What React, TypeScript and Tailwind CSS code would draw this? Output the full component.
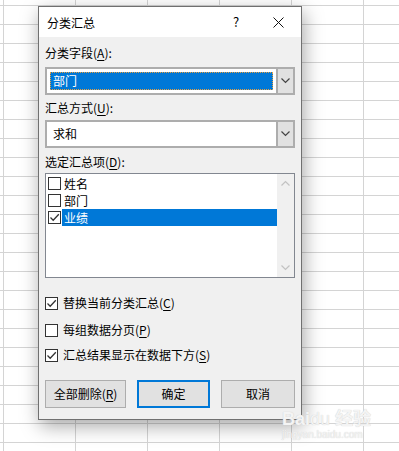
import React from 'react';

const font = "font-['Microsoft_YaHei_UI','Noto_Sans_CJK_SC',sans-serif]";

// small chevron used by combo boxes and the list scrollbar
const Chevron = ({ up = false, color = '#444' }: { up?: boolean; color?: string }) => (
  <svg width="9" height="6" viewBox="0 0 9 6" className="block">
    <path d={up ? 'M0.5 5.5 L4.5 1.5 L8.5 5.5' : 'M0.5 0.5 L4.5 4.5 L8.5 0.5'} fill="none" stroke={color} strokeWidth="1.2" />
  </svg>
);

const Check = () => (
  <svg width="11" height="11" viewBox="0 0 11 11" className="block">
    <path d="M1.5 5.5 L4.2 8.2 L9.8 2.2" fill="none" stroke="#333" strokeWidth="1.3" />
  </svg>
);

const Box = ({ checked = false }: { checked?: boolean }) => (
  <span className="flex h-[13px] w-[13px] shrink-0 items-center justify-center border border-[#333] bg-white">
    {checked && <Check />}
  </span>
);

const Combo = ({ value, focused = false }: { value: string; focused?: boolean }) => (
  <div className="flex h-[28px] w-[250px] border-2 border-[#adadad] bg-white">
    <div className="flex flex-1 items-center p-[3px]">
      {focused ? (
        <div className="flex h-full w-full items-center border border-dotted border-[#e8a040] bg-[#0078d7] pl-[2px] text-white">{value}</div>
      ) : (
        <div className="pl-[3px]">{value}</div>
      )}
    </div>
    <div className="flex w-[17px] items-center justify-center border-l-2 border-[#adadad] bg-[#e1e1e1]">
      <Chevron />
    </div>
  </div>
);

const Label = ({ text, hot, className = '' }: { text: string; hot: string; className?: string }) => (
  <div className={`h-[16px] leading-[16px] ${className}`}>
    {text}(<span className="underline underline-offset-2">{hot}</span>):
  </div>
);

const CheckRow = ({ text, hot, checked, className = '' }: { text: string; hot: string; checked?: boolean; className?: string }) => (
  <div className={`flex h-[16px] items-center gap-[5px] leading-[16px] ${className}`}>
    <Box checked={checked} />
    <span>
      {text}(<span className="underline underline-offset-2">{hot}</span>)
    </span>
  </div>
);

const items = [
  { name: '姓名', checked: false },
  { name: '部门', checked: false },
  { name: '业绩', checked: true },
];

export default function App() {
  return (
    <div
      className={`relative h-[451px] w-[399px] overflow-hidden bg-white pl-[38px] pt-[6px] text-[12px] text-black ${font} [background-image:linear-gradient(to_right,#d4d4d4_1px,transparent_1px),linear-gradient(to_bottom,#d4d4d4_1px,transparent_1px)] [background-size:72px_19px] [background-position:3px_5px]`}
    >
      <div className="flex h-[414px] w-[264px] flex-col border border-[#707070] bg-[#f0f0f0] shadow-[2px_6px_18px_rgba(0,0,0,0.35)]">
        {/* title bar */}
        <div className="flex h-[30px] items-center bg-white pl-[8px]">
          <span className="flex-1 pt-[2px]">分类汇总</span>
          <span className="w-[20px] text-center text-[13px]">?</span>
          <span className="ml-[25px] mr-[16px] flex w-[14px] items-center justify-center">
            <svg width="11" height="11" viewBox="0 0 11 11">
              <path d="M0.5 0.5 L10.5 10.5 M10.5 0.5 L0.5 10.5" stroke="#111" strokeWidth="1" />
            </svg>
          </span>
        </div>

        {/* body */}
        <div className="flex flex-col px-[6px]">
          <Label text="分类字段" hot="A" className="mt-[8px]" />
          <div className="mt-[6px]">
            <Combo value="部门" focused />
          </div>

          <Label text="汇总方式" hot="U" className="mt-[5px]" />
          <div className="mt-[4px]">
            <Combo value="求和" />
          </div>

          <Label text="选定汇总项" hot="D" className="mt-[6px]" />
          <div className="mt-[3px] flex h-[105px] w-[250px] border border-[#828790] bg-white">
            <div className="flex flex-1 flex-col pl-[2px] pt-[1px]">
              {items.map((it) => (
                <div key={it.name} className="flex h-[17px] items-center">
                  <Box checked={it.checked} />
                  <span
                    className={`ml-[1px] flex h-full flex-1 items-center pl-[2px] ${it.checked ? 'bg-[#0078d7] text-white' : ''}`}
                  >
                    {it.name}
                  </span>
                </div>
              ))}
            </div>
            <div className="flex w-[17px] flex-col items-center justify-between bg-[#f0f0f0] py-[6px]">
              <Chevron up color="#c2c2c2" />
              <Chevron color="#c2c2c2" />
            </div>
          </div>

          <CheckRow text="替换当前分类汇总" hot="C" checked className="mt-[17px]" />
          <CheckRow text="每组数据分页" hot="P" className="mt-[11px]" />
          <CheckRow text="汇总结果显示在数据下方" hot="S" checked className="mt-[9px]" />

          <div className="mt-[17px] flex h-[28px] gap-[11px]">
            <button className="w-[81px] border border-[#adadad] bg-[#e1e1e1]">
              全部删除(<span className="underline underline-offset-2">R</span>)
            </button>
            <button className="w-[73px] border-2 border-[#0078d7] bg-[#e1e1e1]">确定</button>
            <button className="w-[74px] border border-[#adadad] bg-[#e1e1e1]">取消</button>
          </div>
        </div>
      </div>

      {/* watermark */}
      <div className="pointer-events-none absolute left-[282px] top-[408px] flex flex-col items-start text-[#f4f4f4] [text-shadow:0_0_1px_#c4c4c4]">
        <span className="whitespace-nowrap text-[18px] font-bold leading-[19px] font-['Liberation_Sans',sans-serif]">
          Bai<span className="font-normal">du</span> <span className="font-['Noto_Sans_CJK_SC',sans-serif]">经验</span>
        </span>
        <span className="text-[10px] leading-[11px] font-['Liberation_Sans',sans-serif]">jingyan.baidu.com</span>
      </div>
    </div>
  );
}
